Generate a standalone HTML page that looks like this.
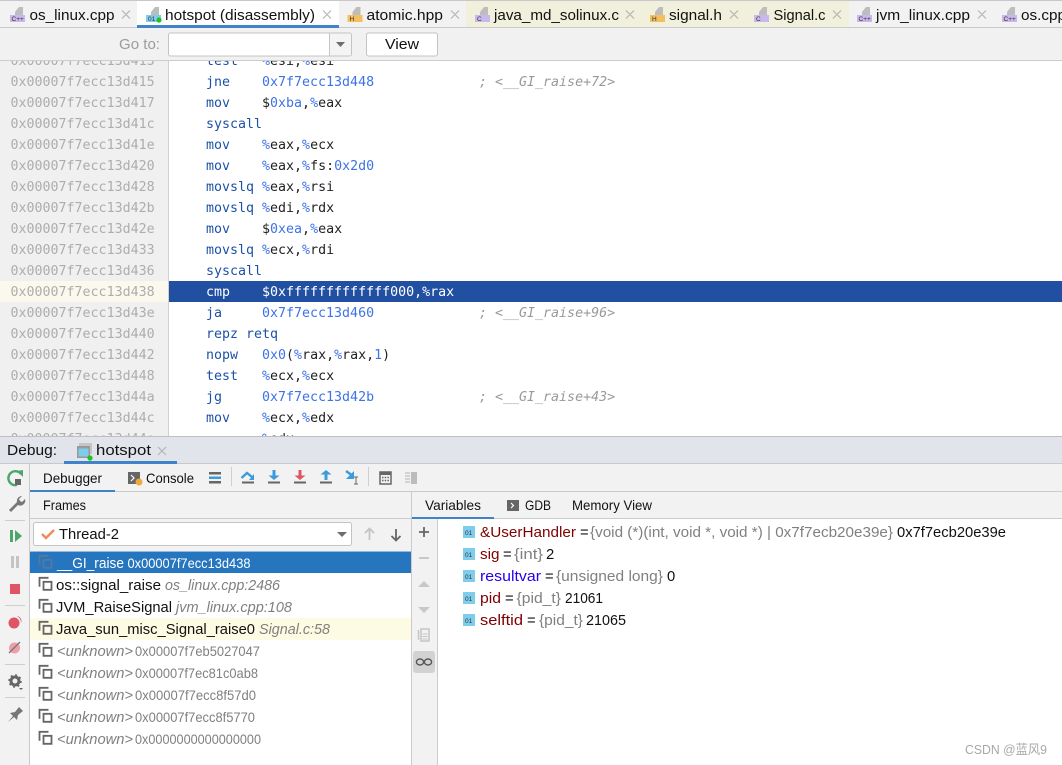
<!DOCTYPE html>
<html><head><meta charset="utf-8"><style>
html,body{margin:0;padding:0;background:#fff;overflow:hidden}
svg{display:block}
text{font-family:"Liberation Sans","Noto Sans CJK SC",sans-serif;font-size:14.8px;fill:#111;white-space:pre}
.m text,text.m{font-family:"DejaVu Sans Mono","Liberation Mono",monospace;font-size:13.3px}
.a text{fill:#adadad}
.i{fill:#1c52a6}.o{fill:#222}
tspan.n{fill:#3d72e8}tspan.p{fill:#3d72e8}
.c{fill:#9a9a9a;font-style:italic}
.l{font-size:6.5px;fill:#333}
.g{fill:#808080}.gi{fill:#808080;font-style:italic}
.x{stroke:#b5b5b5;stroke-width:1.2;fill:none}
.d{fill:#808080;font-size:13.8px}
</style></head><body>
<svg width="1062" height="765" viewBox="0 0 1062 765" xmlns="http://www.w3.org/2000/svg">
<rect width="1062" height="765" fill="#fff"/>
<rect x="0" y="60" width="168" height="380" fill="#f0f0f0"/>
<rect x="168" y="60" width="1" height="380" fill="#d0d0d0"/>
<rect x="0" y="281" width="168" height="21" fill="#fbf8ed"/>
<rect x="169" y="281" width="893" height="21" fill="#2150a3"/>

<g class="m a">
<text x="10.5" y="65">0x00007f7ecc13d413</text><text x="10.5" y="86">0x00007f7ecc13d415</text><text x="10.5" y="107">0x00007f7ecc13d417</text><text x="10.5" y="128">0x00007f7ecc13d41c</text><text x="10.5" y="149">0x00007f7ecc13d41e</text><text x="10.5" y="170">0x00007f7ecc13d420</text><text x="10.5" y="191">0x00007f7ecc13d428</text><text x="10.5" y="212">0x00007f7ecc13d42b</text><text x="10.5" y="233">0x00007f7ecc13d42e</text><text x="10.5" y="254">0x00007f7ecc13d433</text><text x="10.5" y="275">0x00007f7ecc13d436</text><text x="10.5" y="296">0x00007f7ecc13d438</text><text x="10.5" y="317">0x00007f7ecc13d43e</text><text x="10.5" y="338">0x00007f7ecc13d440</text><text x="10.5" y="359">0x00007f7ecc13d442</text><text x="10.5" y="380">0x00007f7ecc13d448</text><text x="10.5" y="401">0x00007f7ecc13d44a</text><text x="10.5" y="422">0x00007f7ecc13d44c</text><text x="10.5" y="443">0x00007f7ecc13d44e</text>
</g>
<g class="m">
<text class="i" x="206" y="65">test</text><text class="o" x="262" y="65"><tspan class="p">%</tspan>esi,<tspan class="p">%</tspan>esi</text>
<text class="i" x="206" y="86">jne</text><text x="262" y="86"><tspan class="n">0x7f7ecc13d448</tspan></text><text class="c" x="479" y="86">; &lt;__GI_raise+72&gt;</text>
<text class="i" x="206" y="107">mov</text><text class="o" x="262" y="107">$<tspan class="n">0xba</tspan>,<tspan class="p">%</tspan>eax</text>
<text class="i" x="206" y="128">syscall</text>
<text class="i" x="206" y="149">mov</text><text class="o" x="262" y="149"><tspan class="p">%</tspan>eax,<tspan class="p">%</tspan>ecx</text>
<text class="i" x="206" y="170">mov</text><text class="o" x="262" y="170"><tspan class="p">%</tspan>eax,<tspan class="p">%</tspan>fs:<tspan class="n">0x2d0</tspan></text>
<text class="i" x="206" y="191">movslq</text><text class="o" x="262" y="191"><tspan class="p">%</tspan>eax,<tspan class="p">%</tspan>rsi</text>
<text class="i" x="206" y="212">movslq</text><text class="o" x="262" y="212"><tspan class="p">%</tspan>edi,<tspan class="p">%</tspan>rdx</text>
<text class="i" x="206" y="233">mov</text><text class="o" x="262" y="233">$<tspan class="n">0xea</tspan>,<tspan class="p">%</tspan>eax</text>
<text class="i" x="206" y="254">movslq</text><text class="o" x="262" y="254"><tspan class="p">%</tspan>ecx,<tspan class="p">%</tspan>rdi</text>
<text class="i" x="206" y="275">syscall</text>
<text x="206" y="296" style="fill:#fff">cmp</text><text x="262" y="296" style="fill:#fff">$0xfffffffffffff000,%rax</text>
<text class="i" x="206" y="317">ja</text><text x="262" y="317"><tspan class="n">0x7f7ecc13d460</tspan></text><text class="c" x="479" y="317">; &lt;__GI_raise+96&gt;</text>
<text class="i" x="206" y="338">repz retq</text>
<text class="i" x="206" y="359">nopw</text><text class="o" x="262" y="359"><tspan class="n">0x0</tspan>(<tspan class="p">%</tspan>rax,<tspan class="p">%</tspan>rax,<tspan class="n">1</tspan>)</text>
<text class="i" x="206" y="380">test</text><text class="o" x="262" y="380"><tspan class="p">%</tspan>ecx,<tspan class="p">%</tspan>ecx</text>
<text class="i" x="206" y="401">jg</text><text x="262" y="401"><tspan class="n">0x7f7ecc13d42b</tspan></text><text class="c" x="479" y="401">; &lt;__GI_raise+43&gt;</text>
<text class="i" x="206" y="422">mov</text><text class="o" x="262" y="422"><tspan class="p">%</tspan>ecx,<tspan class="p">%</tspan>edx</text>
<text class="o" x="262" y="443"><tspan class="p">%</tspan>edx</text>
</g>

<!-- tab bar -->
<rect x="0" y="0" width="1062" height="28" fill="#f2f2f2"/>
<rect x="0" y="0" width="1062" height="1" fill="#c8c8c8"/>
<rect x="466" y="1" width="383" height="26" fill="#f0f0dc"/>
<rect x="137" y="1" width="202" height="25" fill="#fff"/>
<rect x="0" y="27" width="1062" height="1" fill="#c9c9c9"/>
<rect x="137" y="25" width="202" height="3" fill="#4083c9"/>
<text x="29.5" y="20" textLength="85" lengthAdjust="spacingAndGlyphs">os_linux.cpp</text>
<text x="165" y="20" textLength="150" lengthAdjust="spacingAndGlyphs">hotspot (disassembly)</text>
<text x="366.5" y="20" textLength="76.5" lengthAdjust="spacingAndGlyphs">atomic.hpp</text>
<text x="494" y="20" textLength="125" lengthAdjust="spacingAndGlyphs">java_md_solinux.c</text>
<text x="669" y="20" textLength="53" lengthAdjust="spacingAndGlyphs">signal.h</text>
<text x="773.5" y="20" textLength="52" lengthAdjust="spacingAndGlyphs">Signal.c</text>
<text x="876" y="20" textLength="94" lengthAdjust="spacingAndGlyphs">jvm_linux.cpp</text>
<text x="1021" y="20" textLength="45" lengthAdjust="spacingAndGlyphs">os.cpp</text>
<path class="x" d="M122 10.5l8 8m0-8l-8 8M323 10.5l8 8m0-8l-8 8M451 10.5l8 8m0-8l-8 8M626 10.5l8 8m0-8l-8 8M730 10.5l8 8m0-8l-8 8M833 10.5l8 8m0-8l-8 8M978 10.5l8 8m0-8l-8 8"/>
<!-- file icons -->
<g transform="translate(10,7)"><path d="M5 8V5L9 0h4v8z" fill="#bdbdbd"/><rect y="8" width="15" height="7" fill="#c9b8ec"/><text class="l" x="1.5" y="14">C++</text></g>
<g transform="translate(146,7)"><path d="M5 8V5L9 0h4v8z" fill="#bdbdbd"/><rect y="8" width="15" height="7" fill="#7fcdec"/><text class="l" x="2" y="14">01</text><circle cx="13" cy="13" r="2.6" fill="#1fc21f"/></g>
<g transform="translate(347.5,7)"><path d="M5 8V5L9 0h4v8z" fill="#bdbdbd"/><rect y="8" width="15" height="7" fill="#f2c060"/><text class="l" x="2" y="14">H</text></g>
<g transform="translate(475,7)"><path d="M5 8V5L9 0h4v8z" fill="#bdbdbd"/><rect y="8" width="15" height="7" fill="#c9b8ec"/><text class="l" x="2" y="14">C</text></g>
<g transform="translate(650,7)"><path d="M5 8V5L9 0h4v8z" fill="#bdbdbd"/><rect y="8" width="15" height="7" fill="#f2c060"/><text class="l" x="2" y="14">H</text></g>
<g transform="translate(754,7)"><path d="M5 8V5L9 0h4v8z" fill="#bdbdbd"/><rect y="8" width="15" height="7" fill="#c9b8ec"/><text class="l" x="2" y="14">C</text></g>
<g transform="translate(857,7)"><path d="M5 8V5L9 0h4v8z" fill="#bdbdbd"/><rect y="8" width="15" height="7" fill="#c9b8ec"/><text class="l" x="1.5" y="14">C++</text></g>
<g transform="translate(1002,7)"><path d="M5 8V5L9 0h4v8z" fill="#bdbdbd"/><rect y="8" width="15" height="7" fill="#c9b8ec"/><text class="l" x="1.5" y="14">C++</text></g>

<!-- toolbar -->
<rect x="0" y="28" width="1062" height="32" fill="#f1f1f1"/>
<rect x="0" y="60" width="1062" height="1" fill="#cdcdcd"/>
<text x="119" y="49" textLength="41" lengthAdjust="spacingAndGlyphs" style="fill:#9b9b9b">Go to:</text>
<rect x="168.5" y="33" width="183" height="23" rx="2" fill="#fff" stroke="#c4c4c4"/>
<rect x="329" y="33" width="1" height="23" fill="#c4c4c4"/>
<rect x="330" y="33.5" width="21" height="22" rx="2" fill="#f4f4f4"/>
<path d="M336 42h9l-4.500 5z" fill="#6e6e6e"/>
<rect x="366.500" y="33" width="71" height="23" rx="2" fill="#fff" stroke="#c4c4c4"/>
<text x="385" y="49" textLength="34" lengthAdjust="spacingAndGlyphs">View</text>

<!-- debug header -->
<rect x="0" y="436" width="1062" height="329" fill="#f2f2f2"/>
<rect x="0" y="436" width="1062" height="28" fill="#e1e4eb"/>
<rect x="0" y="436" width="1062" height="1" fill="#bfbfbf"/>
<rect x="0" y="463" width="1062" height="1" fill="#c9c9c9"/>
<text x="7" y="455" textLength="50" lengthAdjust="spacingAndGlyphs">Debug:</text>
<text x="96" y="455" textLength="55" lengthAdjust="spacingAndGlyphs">hotspot</text>
<rect x="64" y="461" width="113" height="3" fill="#4083c9"/>
<path class="x" d="M158 447l8 8m0-8l-8 8"/>
<g transform="translate(77,443)"><rect x="2" y="0" width="13" height="11" fill="#c5c5c5"/><rect x="0" y="3" width="13" height="12" fill="#999"/><rect x="1.500" y="5.500" width="10" height="8" fill="#7fcdec"/><circle cx="13" cy="15" r="2.600" fill="#1fc21f"/></g>

<!-- left strip -->
<rect x="29" y="464" width="1" height="301" fill="#c9c9c9"/>
<path d="M21 474a7 7 0 1 0-4 11" fill="none" stroke="#4fa66a" stroke-width="2.400"/>
<path d="M17 471l6-1v7z" fill="#4fa66a"/><rect x="15" y="479" width="6" height="6" fill="#666"/>
<path d="M9 510l8-8a5 5 0 0 1 5-6l-3 3 1 2 2 1 3-3a5 5 0 0 1-7 6l-7 7z" fill="#777"/>
<rect x="5" y="520" width="20" height="1" fill="#cfcfcf"/>
<rect x="10" y="530" width="3" height="12" fill="#4fa66a"/><path d="M15 530l7 6-7 6z" fill="#4fa66a"/>
<rect x="11" y="556" width="3" height="12" fill="#c4c4c4"/><rect x="16" y="556" width="3" height="12" fill="#c4c4c4"/>
<rect x="10" y="584" width="10" height="10" fill="#e05565"/>
<rect x="5" y="605" width="20" height="1" fill="#cfcfcf"/>
<circle cx="14" cy="623" r="5.500" fill="#e05565"/><path d="M17 616a5 5 0 0 1 4 7 8 8 0 0 0-4-7z" fill="#e05565"/>
<circle cx="14.500" cy="648" r="5.500" fill="#eda0a8"/><path d="M9 653l11-11" stroke="#777" stroke-width="1.300"/>
<rect x="5" y="664" width="20" height="1" fill="#cfcfcf"/>
<circle cx="15" cy="681" r="4" fill="none" stroke="#666" stroke-width="3"/><circle cx="15" cy="681" r="6" fill="none" stroke="#666" stroke-width="1.500" stroke-dasharray="2 2.700"/>
<path d="M19 688h4l-2 2z" fill="#666"/>
<rect x="5" y="697" width="20" height="1" fill="#cfcfcf"/>
<path d="M8 722l5-6-3-3 5-1 4-5 4 4-5 4-1 5-3-3z" fill="#777"/>

<!-- debugger tabs -->
<rect x="30" y="491" width="1032" height="1" fill="#cbcbcb"/>
<text x="43" y="483" textLength="59" lengthAdjust="spacingAndGlyphs" style="font-size:14px">Debugger</text>
<rect x="30" y="490" width="85" height="2" fill="#4083c9"/>
<rect x="128" y="472" width="12" height="12" fill="#666"/><path d="M131 475l3 3-3 3" stroke="#fff" stroke-width="1.200" fill="none"/><circle cx="139" cy="482" r="3.500" fill="#eda93a"/>
<text x="146" y="483" textLength="48" lengthAdjust="spacingAndGlyphs" style="font-size:14px">Console</text>
<rect x="209" y="472" width="12" height="2.500" fill="#666"/><rect x="209" y="476.500" width="12" height="2.500" fill="#3d9bd9"/><rect x="209" y="481" width="12" height="2.500" fill="#666"/>
<rect x="231" y="467" width="1" height="19" fill="#cfcfcf"/>
<path d="M241.500 478l5.500-5 5 4" fill="none" stroke="#3d9bd9" stroke-width="2.400"/><path d="M249 480h5v-6z" fill="#3d9bd9"/><rect x="242" y="481.500" width="12" height="2" fill="#666"/>
<path d="M274 470v7" stroke="#3d9bd9" stroke-width="3"/><path d="M268.500 475.500h11l-5.500 4.500z" fill="#3d9bd9"/><rect x="268" y="481.500" width="12" height="2" fill="#666"/>
<path d="M300 470v7" stroke="#e05565" stroke-width="3"/><path d="M294.500 475.500h11l-5.500 4.500z" fill="#e05565"/><rect x="294" y="481.500" width="12" height="2" fill="#666"/>
<path d="M326 480v-7" stroke="#3d9bd9" stroke-width="3"/><path d="M320.500 474.500h11l-5.500-4.500z" fill="#3d9bd9"/><rect x="320" y="481.500" width="12" height="2" fill="#666"/>
<path d="M346 471l7 5" stroke="#3d9bd9" stroke-width="2.500"/><path d="M354 471v8h-8z" fill="#3d9bd9"/><path d="M354 477h4m-2 0v7m-2 0h4" stroke="#666" stroke-width="1" fill="none"/>
<rect x="368" y="467" width="1" height="19" fill="#cfcfcf"/>
<rect x="380" y="472" width="11" height="12" fill="none" stroke="#666" stroke-width="1.500"/><rect x="380" y="472" width="11" height="3" fill="#666"/><path d="M382 477.500h7M382 480.500h7" stroke="#666" stroke-width="1.500" stroke-dasharray="1.500 1.200"/>
<rect x="411" y="472" width="6" height="12" fill="#bcbcbc"/><path d="M405 473h5M405 476h5M405 479h5M405 482h5" stroke="#c8c8c8" stroke-width="1.500"/>

<!-- frames -->
<text x="43" y="510" textLength="43" lengthAdjust="spacingAndGlyphs" style="font-size:14px">Frames</text>
<rect x="30" y="518" width="381" height="1" fill="#cbcbcb"/>
<rect x="33.500" y="522.500" width="318" height="23" rx="2" fill="#fff" stroke="#c4c4c4"/>
<path d="M42 534l4 4 8-8" fill="none" stroke="#f08a5d" stroke-width="2.400"/>
<text x="59" y="539" textLength="60" lengthAdjust="spacingAndGlyphs">Thread-2</text>
<path d="M337 532h10l-5 5z" fill="#6e6e6e"/>
<path d="M369.500 540v-11M365 533l4.500-4.500 4.500 4.500" fill="none" stroke="#c4c4c4" stroke-width="1.800"/>
<path d="M396 529v11M391.500 536l4.500 4.500 4.500-4.500" fill="none" stroke="#666" stroke-width="1.800"/>
<rect x="30" y="551" width="381" height="214" fill="#fff"/>
<rect x="30" y="551.500" width="381" height="21.500" fill="#2675bf"/>
<rect x="30" y="618" width="381" height="22" fill="#fdfbe3"/>
<rect x="411" y="492" width="1" height="273" fill="#cbcbcb"/>
<g transform="translate(0,-0.7)" fill="none" stroke-width="1.800">
<path d="M39.500 565.500v-9h9M43.500 560.500h8v8h-8z" stroke="#54789e"/>
<path d="M39.500 587.500v-9h9M43.500 582.500h8v8h-8zM39.500 609.500v-9h9M43.500 604.500h8v8h-8zM39.500 631.500v-9h9M43.500 626.500h8v8h-8zM39.500 653.500v-9h9M43.500 648.500h8v8h-8zM39.500 675.500v-9h9M43.500 670.500h8v8h-8zM39.500 697.500v-9h9M43.500 692.500h8v8h-8zM39.500 719.500v-9h9M43.500 714.500h8v8h-8zM39.500 741.500v-9h9M43.500 736.500h8v8h-8z" stroke="#666"/>
</g>
<text x="57" y="568" textLength="67" lengthAdjust="spacingAndGlyphs" style="fill:#fff">__GI_raise</text><text x="127.500" y="568" textLength="123" lengthAdjust="spacingAndGlyphs" style="fill:#fff;font-size:13.8px">0x00007f7ecc13d438</text>
<text x="56" y="590" textLength="105" lengthAdjust="spacingAndGlyphs">os::signal_raise</text><text class="gi" x="165" y="590" textLength="115" lengthAdjust="spacingAndGlyphs">os_linux.cpp:2486</text>
<text x="56" y="612" textLength="116" lengthAdjust="spacingAndGlyphs">JVM_RaiseSignal</text><text class="gi" x="176" y="612" textLength="116" lengthAdjust="spacingAndGlyphs">jvm_linux.cpp:108</text>
<text x="56" y="634" textLength="199" lengthAdjust="spacingAndGlyphs">Java_sun_misc_Signal_raise0</text><text class="gi" x="259" y="634" textLength="71" lengthAdjust="spacingAndGlyphs">Signal.c:58</text>
<text class="gi" x="57" y="656" textLength="76" lengthAdjust="spacingAndGlyphs">&lt;unknown&gt;</text><text class="d" x="135" y="656" textLength="125" lengthAdjust="spacingAndGlyphs">0x00007f7eb5027047</text>
<text class="gi" x="57" y="678" textLength="76" lengthAdjust="spacingAndGlyphs">&lt;unknown&gt;</text><text class="d" x="135" y="678" textLength="123" lengthAdjust="spacingAndGlyphs">0x00007f7ec81c0ab8</text>
<text class="gi" x="57" y="700" textLength="76" lengthAdjust="spacingAndGlyphs">&lt;unknown&gt;</text><text class="d" x="135" y="700" textLength="121" lengthAdjust="spacingAndGlyphs">0x00007f7ecc8f57d0</text>
<text class="gi" x="57" y="722" textLength="76" lengthAdjust="spacingAndGlyphs">&lt;unknown&gt;</text><text class="d" x="135" y="722" textLength="120" lengthAdjust="spacingAndGlyphs">0x00007f7ecc8f5770</text>
<text class="gi" x="57" y="744" textLength="76" lengthAdjust="spacingAndGlyphs">&lt;unknown&gt;</text><text class="d" x="135" y="744" textLength="126" lengthAdjust="spacingAndGlyphs">0x0000000000000000</text>

<!-- variables -->
<text x="425" y="510" textLength="56" lengthAdjust="spacingAndGlyphs" style="font-size:14px">Variables</text>
<rect x="412" y="518" width="650" height="1" fill="#cbcbcb"/>
<rect x="412" y="517" width="82" height="2" fill="#4083c9"/>
<rect x="507" y="500" width="12" height="11" fill="#666"/><path d="M511 503l2.500 2.500-2.500 2.500" stroke="#fff" stroke-width="1.200" fill="none"/>
<text x="525" y="510" textLength="26" lengthAdjust="spacingAndGlyphs" style="font-size:14px">GDB</text>
<text x="572" y="510" textLength="80" lengthAdjust="spacingAndGlyphs" style="font-size:14px">Memory View</text>
<rect x="437" y="519" width="625" height="246" fill="#fff"/>
<rect x="437" y="519" width="1" height="246" fill="#cbcbcb"/>
<path d="M419 532h10M424 527v10" stroke="#666" stroke-width="1.800"/>
<path d="M419 558h10" stroke="#c4c4c4" stroke-width="1.800"/>
<path d="M418 587l6-6 6 6z" fill="#c8c8c8"/>
<path d="M418 607l6 6 6-6z" fill="#c8c8c8"/>
<path d="M418.500 630v9h1M421 629h8v12h-8z" fill="none" stroke="#c4c4c4" stroke-width="1.500"/>
<path d="M422.500 634h5M422.500 636.500h5M422.500 639h5" stroke="#c4c4c4" stroke-width="1"/>
<rect x="413" y="651" width="22" height="22" rx="3" fill="#d2d2d2"/>
<ellipse cx="420" cy="662" rx="3.600" ry="3" fill="none" stroke="#555" stroke-width="1.400"/><ellipse cx="428" cy="662" rx="3.600" ry="3" fill="none" stroke="#555" stroke-width="1.400"/>
<g><rect x="463" y="526" width="12" height="12" fill="#7fcdec"/><rect x="463" y="548" width="12" height="12" fill="#7fcdec"/><rect x="463" y="570" width="12" height="12" fill="#7fcdec"/><rect x="463" y="592" width="12" height="12" fill="#7fcdec"/><rect x="463" y="614" width="12" height="12" fill="#7fcdec"/></g>
<text class="l" x="465" y="535">01</text><text class="l" x="465" y="557">01</text><text class="l" x="465" y="579">01</text><text class="l" x="465" y="601">01</text><text class="l" x="465" y="623">01</text>

<text x="480" y="537" textLength="96" lengthAdjust="spacingAndGlyphs" style="fill:#7f0000">&amp;UserHandler</text><text x="580" y="537">=</text><text class="g" x="590" y="537" textLength="303" lengthAdjust="spacingAndGlyphs">{void (*)(int, void *, void *) | 0x7f7ecb20e39e}</text><text x="897" y="537" textLength="109" lengthAdjust="spacingAndGlyphs">0x7f7ecb20e39e</text>
<text x="480" y="559" textLength="19.500" lengthAdjust="spacingAndGlyphs" style="fill:#7f0000">sig</text><text x="503" y="559">=</text><text class="g" x="514" y="559" textLength="29" lengthAdjust="spacingAndGlyphs">{int}</text><text x="546" y="559">2</text>
<text x="480" y="581" textLength="61" lengthAdjust="spacingAndGlyphs" style="fill:#2200ee">resultvar</text><text x="545" y="581">=</text><text class="g" x="556" y="581" textLength="107" lengthAdjust="spacingAndGlyphs">{unsigned long}</text><text x="667" y="581">0</text>
<text x="480" y="603" textLength="21" lengthAdjust="spacingAndGlyphs" style="fill:#7f0000">pid</text><text x="505" y="603">=</text><text class="g" x="516.500" y="603" textLength="44.500" lengthAdjust="spacingAndGlyphs">{pid_t}</text><text x="565" y="603" textLength="38" lengthAdjust="spacingAndGlyphs">21061</text>
<text x="480" y="625" textLength="43" lengthAdjust="spacingAndGlyphs" style="fill:#7f0000">selftid</text><text x="527" y="625">=</text><text class="g" x="539" y="625" textLength="44" lengthAdjust="spacingAndGlyphs">{pid_t}</text><text x="586" y="625" textLength="40" lengthAdjust="spacingAndGlyphs">21065</text>

<text x="965" y="754" textLength="82" lengthAdjust="spacingAndGlyphs" style="fill:#a8a8a8;font-size:13px">CSDN @蓝风9</text>
</svg>
</body></html>
